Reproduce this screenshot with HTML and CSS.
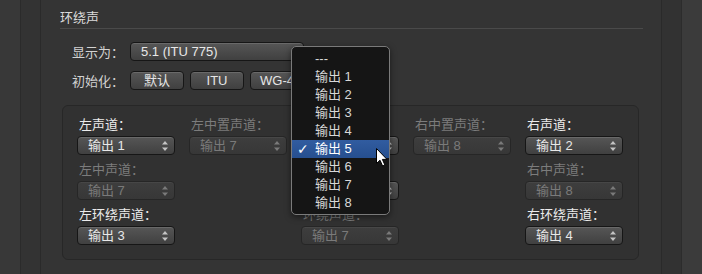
FILE: index.html
```html
<!DOCTYPE html>
<html lang="zh">
<head>
<meta charset="utf-8">
<link rel="stylesheet" href="styles.css">
</head>
<body>
<div class="app">
  <div class="lstrip"></div>
  <div class="lcol"></div>
  <div class="main">
    <div class="hdr">环绕声</div>
    <div class="form">
      <div class="frow">
        <span class="flabel">显示为：</span>
        <div class="pop wide"><span>5.1 (ITU 775)</span><svg class="step" viewBox="0 0 6 10"><path d="M3 0L6 3.6H0Z M3 10L6 6.4H0Z"/></svg></div>
      </div>
      <div class="frow">
        <span class="flabel">初始化：</span>
        <div class="btns">
          <div class="btn">默认</div>
          <div class="btn">ITU</div>
          <div class="btn">WG-4</div>
        </div>
      </div>
    </div>
    <div class="panel">
      <div class="cell"><div class="lab">左声道：</div><div class="pop"><span>输出 1</span><svg class="step" viewBox="0 0 6 10"><path d="M3 0L6 3.6H0Z M3 10L6 6.4H0Z"/></svg></div></div>
      <div class="cell off"><div class="lab">左中置声道：</div><div class="pop"><span>输出 7</span><svg class="step" viewBox="0 0 6 10"><path d="M3 0L6 3.6H0Z M3 10L6 6.4H0Z"/></svg></div></div>
      <div class="cell"><div class="lab">中置声道：</div><div class="pop"><span>输出 5</span><svg class="step" viewBox="0 0 6 10"><path d="M3 0L6 3.6H0Z M3 10L6 6.4H0Z"/></svg></div></div>
      <div class="cell off"><div class="lab">右中置声道：</div><div class="pop"><span>输出 8</span><svg class="step" viewBox="0 0 6 10"><path d="M3 0L6 3.6H0Z M3 10L6 6.4H0Z"/></svg></div></div>
      <div class="cell"><div class="lab">右声道：</div><div class="pop"><span>输出 2</span><svg class="step" viewBox="0 0 6 10"><path d="M3 0L6 3.6H0Z M3 10L6 6.4H0Z"/></svg></div></div>

      <div class="cell off"><div class="lab">左中声道：</div><div class="pop"><span>输出 7</span><svg class="step" viewBox="0 0 6 10"><path d="M3 0L6 3.6H0Z M3 10L6 6.4H0Z"/></svg></div></div>
      <div class="cell empty"></div>
      <div class="cell"><div class="lab">LFE：</div><div class="pop"><span>输出 6</span><svg class="step" viewBox="0 0 6 10"><path d="M3 0L6 3.6H0Z M3 10L6 6.4H0Z"/></svg></div></div>
      <div class="cell empty"></div>
      <div class="cell off"><div class="lab">右中声道：</div><div class="pop"><span>输出 8</span><svg class="step" viewBox="0 0 6 10"><path d="M3 0L6 3.6H0Z M3 10L6 6.4H0Z"/></svg></div></div>

      <div class="cell"><div class="lab">左环绕声道：</div><div class="pop"><span>输出 3</span><svg class="step" viewBox="0 0 6 10"><path d="M3 0L6 3.6H0Z M3 10L6 6.4H0Z"/></svg></div></div>
      <div class="cell empty"></div>
      <div class="cell off"><div class="lab">环绕声道：</div><div class="pop"><span>输出 7</span><svg class="step" viewBox="0 0 6 10"><path d="M3 0L6 3.6H0Z M3 10L6 6.4H0Z"/></svg></div></div>
      <div class="cell empty"></div>
      <div class="cell"><div class="lab">右环绕声道：</div><div class="pop"><span>输出 4</span><svg class="step" viewBox="0 0 6 10"><path d="M3 0L6 3.6H0Z M3 10L6 6.4H0Z"/></svg></div></div>
    </div>
  </div>
  <div class="rcol"></div>
  <div class="rstrip"></div>

  <div class="menu">
    <div class="item">---</div>
    <div class="item">输出 1</div>
    <div class="item">输出 2</div>
    <div class="item">输出 3</div>
    <div class="item">输出 4</div>
    <div class="item sel"><span class="check">✓</span>输出 5</div>
    <div class="item">输出 6</div>
    <div class="item">输出 7</div>
    <div class="item">输出 8</div>
  </div>
  <svg class="cursor" viewBox="0 0 12 19" width="12" height="19"><path d="M0.5 0.5 L0.5 15.5 L4 12.2 L6.6 18 L8.9 17 L6.4 11.4 L11 11.4 Z" fill="#fff" stroke="#000" stroke-width="1" stroke-linejoin="round"/></svg>
</div>
</body>
</html>
```

FILE: styles.css
```css
* { box-sizing: border-box; }
html, body { margin: 0; padding: 0; }
body {
  width: 702px;
  height: 274px;
  overflow: hidden;
  background: #343434;
  font-family: "Liberation Sans", "Noto Sans CJK SC", sans-serif;
  font-size: 13px;
  color: #e4e4e4;
}
.app {
  position: relative;
  display: flex;
  width: 702px;
  height: 274px;
}
.lstrip { width: 20px; background: #383838; }
.lcol { width: 21px; background: #333333; border-left: 1px solid #2b2b2b; border-right: 1px solid #2a2a2a; }
.rcol { width: 21px; background: #323232; border-left: 1px solid #2a2a2a; border-right: 1px solid #2c2c2c; }
.rstrip { width: 20px; background: #3b3b3b; }
.main {
  flex: 1;
  padding: 0 18px 0 19px;
}
.hdr {
  padding-top: 9px;
  height: 29px;
  line-height: 16px;
  color: #dadada;
  border-bottom: 1px solid #4a4a4a;
  font-family: "Noto Sans CJK SC", sans-serif;
}
.form {
  padding: 13px 0 0 12px;
  display: flex;
  flex-direction: column;
  gap: 10px;
}
.frow { display: flex; align-items: center; height: 19px; }
.flabel {
  width: 58px;
  color: #d2d2d2;
  font-family: "Noto Sans CJK SC", sans-serif;
  line-height: 16px;
}
.btns { display: flex; gap: 6px; }
.btn {
  width: 54px;
  height: 19px;
  border: 1px solid #161616;
  border-radius: 4px;
  background: linear-gradient(#565656, #404040);
  box-shadow: inset 0 1px 0 rgba(255,255,255,0.12);
  color: #e6e6e6;
  text-align: center;
  line-height: 17px;
  font-size: 13px;
}
.pop {
  position: relative;
  width: 98px;
  height: 19px;
  border: 1px solid #161616;
  border-radius: 4px;
  background: linear-gradient(#565656, #404040);
  box-shadow: inset 0 1px 0 rgba(255,255,255,0.12);
  color: #e8e8e8;
  padding-left: 10px;
  line-height: 17px;
  display: flex;
  align-items: center;
}
.pop span { flex: 1; white-space: nowrap; }
.pop.wide { width: 174px; }
.step {
  width: 6px;
  height: 10px;
  margin-right: 6px;
  fill: #c4c4c4;
}
.panel {
  margin: 15px 2px 0 2px;
  width: 577px;
  height: 155px;
  border: 1px solid #272727;
  border-radius: 6px;
  background: #313131;
  padding: 11px 14px 0 14px;
  display: grid;
  grid-template-columns: repeat(5, 98px);
  grid-auto-rows: 38px;
  column-gap: 14px;
  row-gap: 7px;
}
.cell { display: flex; flex-direction: column; }
.lab {
  height: 16px;
  line-height: 16px;
  margin: 0 0 3px 2px;
  color: #ececec;
  white-space: nowrap;
}
.cell.off .lab { color: #7c7c7c; }
.cell.off .pop {
  background: linear-gradient(#3e3e3e, #373737);
  border-color: #262626;
  box-shadow: inset 0 1px 0 rgba(255,255,255,0.05);
  color: #7a7a7a;
}
.cell.off .step { fill: #7a7a7a; }

.menu {
  position: absolute;
  left: 291px;
  top: 46px;
  width: 99px;
  height: 169px;
  background: #151515;
  border: 1px solid #7a7a7a;
  border-radius: 5px;
  padding: 3px 0;
  box-shadow: 0 2px 6px rgba(0,0,0,0.5);
}
.item {
  position: relative;
  height: 18px;
  line-height: 18px;
  padding-left: 23px;
  color: #d8d8d8;
  white-space: nowrap;
}
.item.sel {
  background: linear-gradient(#315ca0, #264f8f);
  color: #ffffff;
}
.check {
  position: absolute;
  left: 5px;
  top: 0;
  font-family: "DejaVu Sans", sans-serif;
  font-size: 14px;
  font-weight: bold;
}
.cursor {
  position: absolute;
  left: 376px;
  top: 148px;
}
```
